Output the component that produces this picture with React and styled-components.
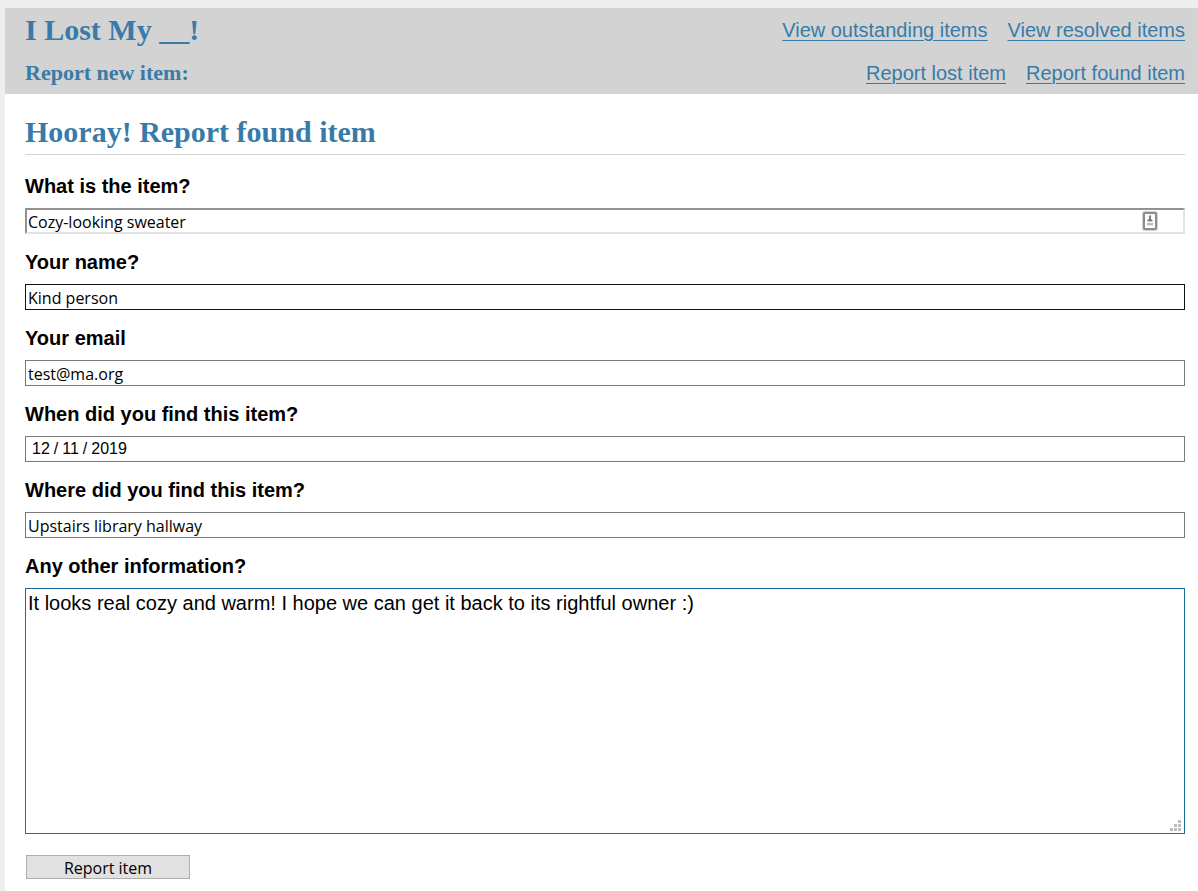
import React from "react";
import styled, { createGlobalStyle } from "styled-components";

const blue = "#387ba8";
const sans = '"Liberation Sans", Arial, sans-serif';
const serif = '"Liberation Serif", "Times New Roman", serif';
const control = '"Open Sans", Tahoma, sans-serif';

const GlobalStyle = createGlobalStyle`
  *, *::before, *::after { box-sizing: border-box; }
  html { background: #eeeeee; }
  body {
    margin: 0;
    padding: 8px 0 0 5px;
    background: #eeeeee;
    color: #000;
    font: 20px/24px ${sans};
  }
`;

const Page = styled.div`
  min-height: calc(100vh - 8px);
  background: #fff;
`;

const Header = styled.header`
  background: #d3d3d3;
  padding: 0 13px 0 20px;
`;

const HeaderRow = styled.div`
  display: flex;
  align-items: center;
  justify-content: space-between;
  height: 43px;
`;

const SiteTitle = styled.h1`
  margin: 0;
  color: ${blue};
  font: bold 30px/43px ${serif};
`;

const SubTitle = styled.h2`
  margin: 0;
  color: ${blue};
  font: bold 22px/43px ${serif};
`;

const Nav = styled.nav`
  display: flex;
  gap: 20px;
`;

const NavLink = styled.a`
  color: ${blue};
  text-decoration: underline;
  text-decoration-thickness: 1px;
  text-underline-offset: 3px;
`;

const Main = styled.main`
  padding: 20px 13px 0 20px;
`;

const PageTitle = styled.h2`
  margin: 0 0 16px;
  padding-bottom: 4px;
  border-bottom: 1px solid #d3d3d3;
  color: ${blue};
  font: bold 30px/36px ${serif};
`;

const Form = styled.form`
  display: flex;
  flex-direction: column;
  gap: 13px;
`;

const Field = styled.div`
  display: flex;
  flex-direction: column;
  gap: 7px;
`;

const Label = styled.label`
  font-weight: bold;
  line-height: 30px;
`;

const ControlWrap = styled.div`
  position: relative;
  display: flex;
`;

const borders = {
  inset: "border: 2px solid; border-color: #929292 #e2e2e2 #e2e2e2 #929292; padding: 1px 1px 0;",
  active: "border: 1px solid #111; padding: 1px 2px 0;",
  plain: "border: 1px solid #7a7a7a; padding: 1px 2px 0;",
};

const TextInput = styled.input`
  width: 100%;
  height: 26px;
  margin: 0;
  border-radius: 0;
  outline: none;
  background: #fff;
  color: #000;
  font: 16px/22px ${control};
  ${(p) => borders[p.$look]}
`;

const DateInput = styled(TextInput)`
  padding: 0 6px;
  font-family: ${sans};

  &::-webkit-calendar-picker-indicator { display: none; }
  &::-webkit-datetime-edit { padding: 0; }
  &::-webkit-datetime-edit-fields-wrapper { padding: 0; }
  &::-webkit-datetime-edit-month-field,
  &::-webkit-datetime-edit-day-field,
  &::-webkit-datetime-edit-year-field { padding: 0; }
  &::-webkit-datetime-edit-text { padding: 0 4px; }
`;

const TextArea = styled.textarea`
  display: block;
  width: 100%;
  height: 246px;
  margin: 0;
  padding: 2px;
  border: 1px solid #1b6ca5;
  border-radius: 0;
  outline: none;
  resize: none;
  background: #fff;
  color: #000;
  font: 20px/24px ${sans};
`;

const ContactBadge = styled.svg`
  position: absolute;
  top: 3px;
  right: 27px;
`;

const Grip = styled.svg`
  position: absolute;
  right: 4px;
  bottom: 3px;
  pointer-events: none;
`;

const SubmitButton = styled.button`
  align-self: flex-start;
  width: 164px;
  height: 24px;
  margin: 8px 1px 12px;
  padding: 2px 0 0;
  border: 1px solid #adadad;
  border-radius: 0;
  background: #e1e1e1;
  color: #000;
  font: 16px/20px ${control};
`;

function ContactIcon() {
  return (
    <ContactBadge width="16" height="20" viewBox="0 0 16 20" aria-hidden="true">
      <rect x="1.5" y="1.5" width="13" height="17" rx="1.5" fill="#fff" stroke="#d2d2d2" strokeWidth="3" />
      <rect x="2" y="2" width="12" height="16" rx="1" fill="#fff" stroke="#8c8c8c" strokeWidth="2" />
      <circle cx="8" cy="5.5" r="1.2" fill="#8a8a8a" />
      <path d="M7 6h2v2l1.5 1v1.5h-5V9L7 8z" fill="#7d7d7d" />
      <path d="M5 12h6v2.5H5z" fill="#bcbcbc" />
    </ContactBadge>
  );
}

function ResizeGrip() {
  return (
    <Grip width="11" height="11" viewBox="0 0 11 11" fill="#bdbdbd" aria-hidden="true">
      <path d="M8 0h3v3H8zM4 4h3v3H4zM8 4h3v3H8zM0 8h3v3H0zM4 8h3v3H4zM8 8h3v3H8z" />
    </Grip>
  );
}

const fields = [
  { id: "item", label: "What is the item?", value: "Cozy-looking sweater", look: "inset", badge: true },
  { id: "name", label: "Your name?", value: "Kind person", look: "active" },
  { id: "email", label: "Your email", value: "test@ma.org", type: "email", look: "plain" },
  { id: "date", label: "When did you find this item?", value: "2019-12-11", type: "date", look: "plain" },
  { id: "place", label: "Where did you find this item?", value: "Upstairs library hallway", look: "plain" },
];

export default function App() {
  return (
    <>
      <GlobalStyle />
      <Page>
        <Header>
          <HeaderRow>
            <SiteTitle>I Lost My __!</SiteTitle>
            <Nav>
              <NavLink href="#outstanding">View outstanding items</NavLink>
              <NavLink href="#resolved">View resolved items</NavLink>
            </Nav>
          </HeaderRow>
          <HeaderRow>
            <SubTitle>Report new item:</SubTitle>
            <Nav>
              <NavLink href="#lost">Report lost item</NavLink>
              <NavLink href="#found">Report found item</NavLink>
            </Nav>
          </HeaderRow>
        </Header>
        <Main>
          <PageTitle>Hooray! Report found item</PageTitle>
          <Form onSubmit={(e) => e.preventDefault()}>
            {fields.map(({ id, label, value, type = "text", look, badge }) => {
              const Input = type === "date" ? DateInput : TextInput;
              return (
                <Field key={id}>
                  <Label htmlFor={id}>{label}</Label>
                  <ControlWrap>
                    <Input id={id} name={id} type={type} defaultValue={value} $look={look} />
                    {badge && <ContactIcon />}
                  </ControlWrap>
                </Field>
              );
            })}
            <Field>
              <Label htmlFor="info">Any other information?</Label>
              <ControlWrap>
                <TextArea
                  id="info"
                  name="info"
                  defaultValue="It looks real cozy and warm! I hope we can get it back to its rightful owner :)"
                />
                <ResizeGrip />
              </ControlWrap>
            </Field>
            <SubmitButton type="submit">Report item</SubmitButton>
          </Form>
        </Main>
      </Page>
    </>
  );
}
